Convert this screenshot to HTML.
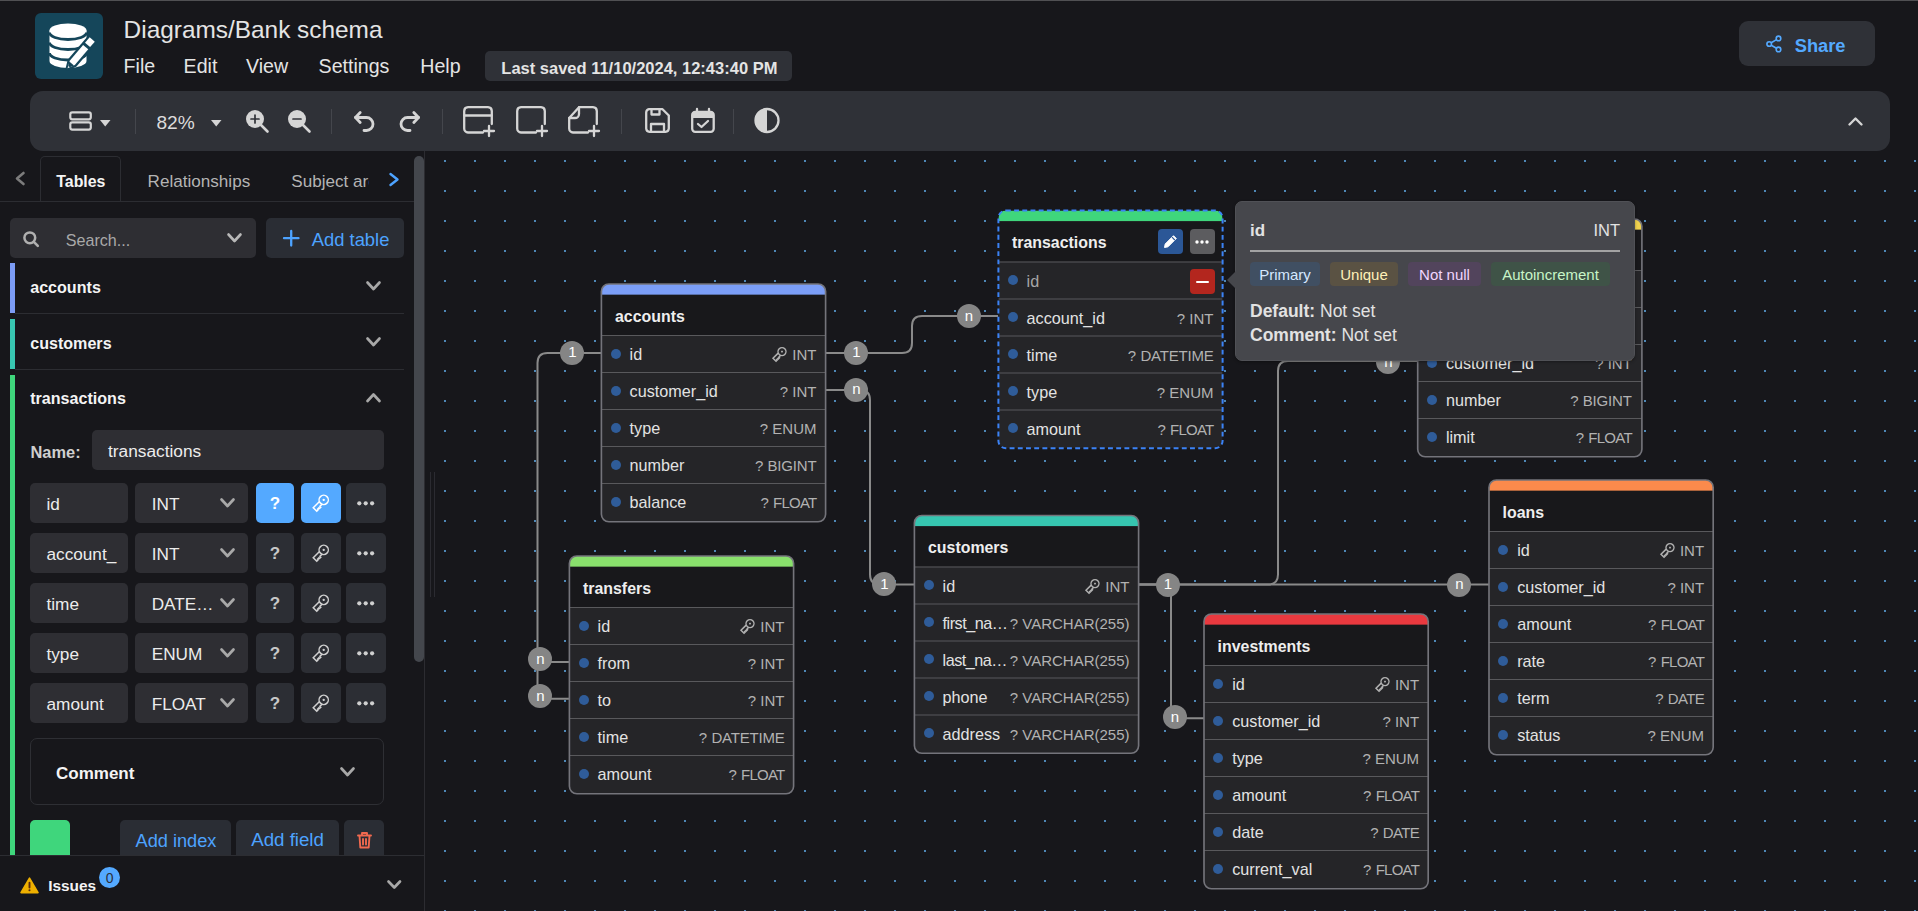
<!DOCTYPE html>
<html><head><meta charset="utf-8"><title>drawDB</title>
<style>
html,body{margin:0;padding:0;}
body{width:1918px;height:911px;overflow:hidden;background:#17171b;position:relative;font-family:"Liberation Sans", sans-serif;}
.t{position:absolute;white-space:pre;line-height:1;}
svg{display:block}
</style></head><body>
<div style="position:absolute;left:0px;top:0px;width:1918px;height:1px;background:#505053;border-radius:0px;"></div>
<div style="position:absolute;left:35px;top:13px;width:68px;height:66px;background:#15465a;border-radius:6px;"></div>
<svg style="position:absolute;left:35px;top:13px;overflow:visible;" width="68" height="66" viewBox="0 0 68 66">
<path d="M14.5,17.5 V48 A18.5,7 0 0 0 51.5,48 V17.5 Z" fill="#fff"/>
<ellipse cx="33" cy="17.5" rx="18.5" ry="7" fill="#fff"/>
<path d="M14.5,19.5 A18.5,7 0 0 0 51.5,19.5" stroke="#15465a" stroke-width="2.8" fill="none"/>
<path d="M14.5,29.5 A18.5,7 0 0 0 51.5,29.5" stroke="#15465a" stroke-width="2.8" fill="none"/>
<path d="M14.5,40 A18.5,7 0 0 0 51.5,40" stroke="#15465a" stroke-width="2.8" fill="none"/>
<g transform="translate(32.6,55.3) rotate(-49.5) scale(0.96)">
  <path d="M0,0 L7.5,-3.8 H29 V3.8 H7.5 Z" fill="#15465a" stroke="#15465a" stroke-width="4" stroke-linejoin="round"/>
  <path d="M32,-3.8 H39.5 V3.8 H32 Z" fill="#15465a" stroke="#15465a" stroke-width="4"/>
  <path d="M0,0 L7.5,-3.5 H29 V3.5 H7.5 Z" fill="#fff"/>
  <path d="M2.3,-1.1 L6.5,-3.2 V3.2 L2.3,1.1 Z" fill="#15465a"/>
  <path d="M32,-3.5 H39.5 V3.5 H32 Z" fill="#fff"/>
</g></svg>
<div class="t" style="left:123.60px;top:18.05px;font-size:24.4px;color:#e4e4e4;font-weight:400;">Diagrams/Bank schema</div>
<div class="t" style="left:123.60px;top:57.01px;font-size:19.6px;color:#e4e4e4;font-weight:400;">File</div>
<div class="t" style="left:183.60px;top:57.01px;font-size:19.6px;color:#e4e4e4;font-weight:400;">Edit</div>
<div class="t" style="left:246.00px;top:57.01px;font-size:19.6px;color:#e4e4e4;font-weight:400;">View</div>
<div class="t" style="left:318.60px;top:57.01px;font-size:19.6px;color:#e4e4e4;font-weight:400;">Settings</div>
<div class="t" style="left:420.30px;top:57.01px;font-size:19.6px;color:#e4e4e4;font-weight:400;">Help</div>
<div style="position:absolute;left:485px;top:51px;width:307px;height:30px;background:#2f3137;border-radius:5px;"></div>
<div class="t" style="left:501.30px;top:59.83px;font-size:16.5px;color:#e4e4e4;font-weight:700;">Last saved 11/10/2024, 12:43:40 PM</div>
<div style="position:absolute;left:1739px;top:21px;width:136px;height:45px;background:#2f3137;border-radius:9px;"></div>
<svg style="position:absolute;left:1767px;top:36px;overflow:visible;" width="16" height="17" viewBox="0 0 16 17"><g fill="none" stroke="#54a9ff" stroke-width="1.6">
<circle cx="11.5" cy="2.4" r="2.3"/><circle cx="2.2" cy="8" r="2.3"/><circle cx="11.5" cy="13.4" r="2.3"/>
<path d="M4.2,6.8 L9.5,3.6 M4.2,9.2 L9.5,12.2"/></g></svg>
<div class="t" style="left:1794.70px;top:36.71px;font-size:18.3px;color:#54a9ff;font-weight:700;">Share</div>
<div style="position:absolute;left:30px;top:91px;width:1860px;height:60px;background:#2f3137;border-radius:13px;"></div>
<svg style="position:absolute;left:68px;top:111px;overflow:visible;" width="24" height="20" viewBox="0 0 24 20"><g fill="none" stroke="#d5d5d5" stroke-width="2.2"><rect x="2.3" y="1.3" width="20.5" height="7" rx="2"/><rect x="2.3" y="11.3" width="20.5" height="7.3" rx="2"/></g></svg>
<svg style="position:absolute;left:99.6px;top:119.8px;overflow:visible;" width="10.5" height="6.6" viewBox="0 0 10.5 6.6"><path d="M0,0 H10.5 L5.25,6.6 Z" fill="#d5d5d5"/></svg>
<div style="position:absolute;left:135px;top:109px;width:1px;height:25px;background:#44464c;border-radius:0px;"></div>
<div class="t" style="left:156.40px;top:112.69px;font-size:19.15px;color:#dcdcdc;font-weight:400;">82%</div>
<svg style="position:absolute;left:210.7px;top:120px;overflow:visible;" width="10.5" height="6.6" viewBox="0 0 10.5 6.6"><path d="M0,0 H10.5 L5.25,6.6 Z" fill="#d5d5d5"/></svg>
<svg style="position:absolute;left:246px;top:110px;overflow:visible;" width="23" height="23" viewBox="0 0 23 23"><circle cx="9" cy="9" r="9" fill="#d5d5d5"/><path d="M15,15 L21.5,21.5" stroke="#d5d5d5" stroke-width="2.6" stroke-linecap="round"/><path d="M5,9 H13" stroke="#2f3137" stroke-width="1.7" stroke-linecap="round"/><path d="M9,5 V13" stroke="#2f3137" stroke-width="1.7" stroke-linecap="round"/></svg>
<svg style="position:absolute;left:288px;top:110px;overflow:visible;" width="23" height="23" viewBox="0 0 23 23"><circle cx="9" cy="9" r="9" fill="#d5d5d5"/><path d="M15,15 L21.5,21.5" stroke="#d5d5d5" stroke-width="2.6" stroke-linecap="round"/><path d="M5,9 H13" stroke="#2f3137" stroke-width="1.7" stroke-linecap="round"/></svg>
<div style="position:absolute;left:331px;top:109px;width:1px;height:25px;background:#44464c;border-radius:0px;"></div>
<svg style="position:absolute;left:354px;top:111px;overflow:visible;" width="21" height="21" viewBox="0 0 21 21"><g fill="none" stroke="#d5d5d5" stroke-width="2.8" stroke-linecap="round" stroke-linejoin="round"><path d="M6.2,1.5 L1.5,6.5 L6.2,11.5"/><path d="M1.5,6.5 H12.5 A6.5,6.5 0 0 1 12.5,19.5 H10"/></g></svg>
<svg style="position:absolute;left:399px;top:111px;overflow:visible;" width="21" height="21" viewBox="0 0 21 21"><g fill="none" stroke="#d5d5d5" stroke-width="2.8" stroke-linecap="round" stroke-linejoin="round"><path d="M14.8,1.5 L19.5,6.5 L14.8,11.5"/><path d="M19.5,6.5 H8.5 A6.5,6.5 0 0 0 8.5,19.5 H11"/></g></svg>
<div style="position:absolute;left:442px;top:109px;width:1px;height:25px;background:#44464c;border-radius:0px;"></div>
<svg style="position:absolute;left:463px;top:106px;overflow:visible;" width="33" height="31" viewBox="0 0 33 31"><g fill="none" stroke="#d5d5d5" stroke-width="2.3" stroke-linecap="round" stroke-linejoin="round"><path d="M20,26.5 H5 A4,4 0 0 1 1.2,22.5 V5 A4,4 0 0 1 5,1.2 H25 A4,4 0 0 1 28.8,5 V18"/><path d="M1.2,9.5 H28.8"/><path d="M21,25 H31 M26,20 V30"/></g></svg>
<svg style="position:absolute;left:516px;top:106px;overflow:visible;" width="33" height="31" viewBox="0 0 33 31"><g fill="none" stroke="#d5d5d5" stroke-width="2.3" stroke-linecap="round" stroke-linejoin="round"><path d="M20,26.5 H5 A4,4 0 0 1 1.2,22.5 V5 A4,4 0 0 1 5,1.2 H25 A4,4 0 0 1 28.8,5 V18"/><path d="M21,25 H31 M26,20 V30"/></g></svg>
<svg style="position:absolute;left:568px;top:106px;overflow:visible;" width="33" height="31" viewBox="0 0 33 31"><g fill="none" stroke="#d5d5d5" stroke-width="2.3" stroke-linecap="round" stroke-linejoin="round"><path d="M20,26.5 H5 A4,4 0 0 1 1.2,22.5 V12 L11,1.2 H25 A4,4 0 0 1 28.8,5 V18"/><path d="M1.2,12 H7 A4,4 0 0 0 11,8 V1.2"/><path d="M21,25 H31 M26,20 V30"/></g></svg>
<div style="position:absolute;left:621px;top:109px;width:1px;height:25px;background:#44464c;border-radius:0px;"></div>
<svg style="position:absolute;left:644.5px;top:108px;overflow:visible;" width="25" height="25" viewBox="0 0 25 25"><g fill="none" stroke="#d5d5d5" stroke-width="2.3" stroke-linecap="round" stroke-linejoin="round"><path d="M4,1.2 H17.5 L23.8,7.5 V20.5 A3.5,3.5 0 0 1 20.5,23.8 H4.5 A3.5,3.5 0 0 1 1.2,20.5 V4.5 A3.5,3.5 0 0 1 4,1.2 Z"/><path d="M6.5,1.5 V6.5 H14.5 V1.5"/><path d="M6,23.5 V16 H19 V23.5"/></g></svg>
<svg style="position:absolute;left:691px;top:108px;overflow:visible;" width="24" height="25" viewBox="0 0 24 25"><g fill="none" stroke="#d5d5d5" stroke-width="2.3" stroke-linecap="round" stroke-linejoin="round"><rect x="1.2" y="4" width="21.5" height="19.8" rx="3"/><path d="M6,1 V6 M18,1 V6"/></g><path d="M2,5 H22 V10 H2 Z" fill="#d5d5d5"/><path d="M7,16 L10.5,19 L17,13" fill="none" stroke="#d5d5d5" stroke-width="2.3" stroke-linecap="round" stroke-linejoin="round"/></svg>
<div style="position:absolute;left:733px;top:109px;width:1px;height:25px;background:#44464c;border-radius:0px;"></div>
<svg style="position:absolute;left:754px;top:108px;overflow:visible;" width="26" height="26" viewBox="0 0 26 26"><circle cx="13" cy="12.5" r="11.5" fill="none" stroke="#d5d5d5" stroke-width="2.3"/><path d="M13,1 A11.5,11.5 0 0 0 13,24 Z" fill="#d5d5d5"/></svg>
<svg style="position:absolute;left:1848px;top:117px;overflow:visible;" width="15" height="9" viewBox="0 0 15 9"><path d="M1.5,7.5 L7.5,1.5 L13.5,7.5" fill="none" stroke="#d5d5d5" stroke-width="2.4" stroke-linecap="round" stroke-linejoin="round"/></svg>
<svg style="position:absolute;left:425px;top:151px" width="1493" height="760"><defs><pattern id="g" x="0" y="0" width="30" height="30" patternUnits="userSpaceOnUse"><rect x="19" y="9" width="2" height="2" fill="#4f88b6"/></pattern></defs><rect width="1493" height="760" fill="url(#g)"/></svg>
<div style="position:absolute;left:0px;top:151px;width:425px;height:760px;background:#17171b;border-radius:0px;"></div>
<div style="position:absolute;left:424px;top:151px;width:1px;height:760px;background:#2c2c31;border-radius:0px;"></div>
<svg style="position:absolute;left:15px;top:172px;overflow:visible;" width="10" height="13" viewBox="0 0 10 13"><path d="M8.5,1 L2,6.5 L8.5,12" fill="none" stroke="#7c7c7c" stroke-width="2.6" stroke-linecap="round" stroke-linejoin="round"/></svg>
<div style="position:absolute;left:40px;top:156px;width:81px;height:46px;border:1px solid #2c2d32;border-bottom:none;border-radius:5px 5px 0 0;box-sizing:border-box;background:#17171b"></div>
<div style="position:absolute;left:0px;top:201px;width:414px;height:1px;background:#2c2d32;border-radius:0px;"></div>
<div class="t" style="left:56.30px;top:173.54px;font-size:15.9px;color:#f4f4f4;font-weight:700;">Tables</div>
<div class="t" style="left:147.60px;top:172.52px;font-size:17.1px;color:#b4b4b4;font-weight:400;">Relationships</div>
<div style="position:absolute;left:291px;top:165px;width:78px;height:30px;overflow:hidden">
<div class="t" style="left:0.30px;top:7.52px;font-size:17.1px;color:#b4b4b4;font-weight:400;">Subject areas</div>
</div>
<svg style="position:absolute;left:389px;top:173px;overflow:visible;" width="11" height="13" viewBox="0 0 11 13"><path d="M1.5,1 L8.5,6.5 L1.5,12" fill="none" stroke="#4da3ff" stroke-width="2.4" stroke-linecap="round" stroke-linejoin="round"/></svg>
<div style="position:absolute;left:414px;top:156px;width:10px;height:506px;background:#44474d;border-radius:5px;"></div>
<div style="position:absolute;left:430px;top:472px;width:1px;height:125px;background:#2b2b31;border-radius:0px;"></div>
<div style="position:absolute;left:434px;top:472px;width:1px;height:125px;background:#2b2b31;border-radius:0px;"></div>
<div style="position:absolute;left:10px;top:218px;width:246px;height:40px;background:#2e2e33;border-radius:5px;"></div>
<svg style="position:absolute;left:23px;top:230.5px;overflow:visible;" width="17" height="16" viewBox="0 0 17 16"><circle cx="6.8" cy="6.8" r="5.4" fill="none" stroke="#b0b0b0" stroke-width="2.5"/><path d="M10.8,10.8 L14.8,14.8" stroke="#b0b0b0" stroke-width="2.6" stroke-linecap="round"/></svg>
<div class="t" style="left:65.80px;top:232.07px;font-size:16.1px;color:#a9a9a9;font-weight:400;">Search...</div>
<svg style="position:absolute;left:227px;top:233px;overflow:visible;" width="16" height="10" viewBox="0 0 16 10"><path d="M1.5,1.5 L7.5,8 L13.5,1.5" fill="none" stroke="#b8b8b8" stroke-width="2.6" stroke-linecap="round" stroke-linejoin="round"/></svg>
<div style="position:absolute;left:266px;top:218px;width:138px;height:40px;background:#2a2d34;border-radius:5px;"></div>
<svg style="position:absolute;left:283px;top:230px;overflow:visible;" width="17" height="17" viewBox="0 0 17 17"><path d="M8.2,1 V15.5 M1,8.2 H15.5" stroke="#4da3ff" stroke-width="2.3" stroke-linecap="round"/></svg>
<div class="t" style="left:311.70px;top:230.72px;font-size:18.4px;color:#4da3ff;font-weight:400;">Add table</div>
<div style="position:absolute;left:10px;top:263px;width:5px;height:50px;background:#7c9cf5;border-radius:0px;"></div>
<div class="t" style="left:30.20px;top:279.37px;font-size:16.1px;color:#f4f4f4;font-weight:700;">accounts</div>
<svg style="position:absolute;left:366px;top:281px;overflow:visible;" width="16" height="10" viewBox="0 0 16 10"><path d="M1.5,1.5 L7.5,8 L13.5,1.5" fill="none" stroke="#a8a8a8" stroke-width="2.7" stroke-linecap="round" stroke-linejoin="round"/></svg>
<div style="position:absolute;left:15px;top:313px;width:389px;height:1px;background:#2c2d32;border-radius:0px;"></div>
<div style="position:absolute;left:10px;top:319px;width:5px;height:50px;background:#38c6b1;border-radius:0px;"></div>
<div class="t" style="left:30.20px;top:335.37px;font-size:16.1px;color:#f4f4f4;font-weight:700;">customers</div>
<svg style="position:absolute;left:366px;top:337px;overflow:visible;" width="16" height="10" viewBox="0 0 16 10"><path d="M1.5,1.5 L7.5,8 L13.5,1.5" fill="none" stroke="#a8a8a8" stroke-width="2.7" stroke-linecap="round" stroke-linejoin="round"/></svg>
<div style="position:absolute;left:15px;top:369px;width:389px;height:1px;background:#2c2d32;border-radius:0px;"></div>
<div style="position:absolute;left:10px;top:375px;width:5px;height:480px;background:#3fd67c;border-radius:0px;"></div>
<div class="t" style="left:30.20px;top:390.37px;font-size:16.1px;color:#f4f4f4;font-weight:700;">transactions</div>
<svg style="position:absolute;left:366px;top:393px;overflow:visible;" width="16" height="10" viewBox="0 0 16 10"><path d="M1.5,8 L7.5,1.5 L13.5,8" fill="none" stroke="#a8a8a8" stroke-width="2.7" stroke-linecap="round" stroke-linejoin="round"/></svg>
<div class="t" style="left:30.50px;top:444.12px;font-size:16.4px;color:#cfcfcf;font-weight:700;">Name:</div>
<div style="position:absolute;left:92px;top:430px;width:292px;height:40px;background:#2e2e33;border-radius:5px;"></div>
<div class="t" style="left:108.00px;top:443.36px;font-size:17.3px;color:#ececec;font-weight:400;">transactions</div>
<div style="position:absolute;left:30px;top:483px;width:98px;height:40px;background:#2e2e33;border-radius:5px;"></div>
<div class="t" style="left:46.50px;top:496.14px;font-size:17.2px;color:#ececec;font-weight:400;">id</div>
<div style="position:absolute;left:135px;top:483px;width:113px;height:40px;background:#2e2e33;border-radius:5px;"></div>
<div class="t" style="left:151.70px;top:496.14px;font-size:17.2px;color:#ececec;font-weight:400;">INT</div>
<svg style="position:absolute;left:219.5px;top:497.5px;overflow:visible;" width="16" height="10" viewBox="0 0 16 10"><path d="M1.5,1.5 L7.5,8 L13.5,1.5" fill="none" stroke="#a8a8a8" stroke-width="2.7" stroke-linecap="round" stroke-linejoin="round"/></svg>
<div style="position:absolute;left:256px;top:483px;width:38px;height:40px;background:#54a9ff;border-radius:5px;"></div>
<div class="t" style="left:275.00px;transform:translateX(-50%);top:495.41px;font-size:17px;color:#ffffff;font-weight:700;">?</div>
<div style="position:absolute;left:301px;top:483px;width:40px;height:40px;background:#54a9ff;border-radius:5px;"></div>
<svg style="position:absolute;left:301px;top:483px;overflow:visible;" width="40" height="40" viewBox="0 0 40 40"><g transform="translate(22.7,16.9) scale(1.0) rotate(-45)"><g fill="none" stroke="#ffffff" stroke-width="1.5" stroke-linejoin="miter"><circle cx="0" cy="0" r="4.6"/><path d="M-4.4,-1.9 H-12.9 V3.1 H-10.9 V2.2 H-9.0 V3.1 H-7.2 V1.9 H-4.4"/></g><circle cx="0" cy="0" r="1.15" fill="#ffffff"/></g></svg>
<div style="position:absolute;left:346px;top:483px;width:40px;height:40px;background:#2c2e34;border-radius:5px;"></div>
<svg style="position:absolute;left:357px;top:501px;overflow:visible;" width="18" height="5" viewBox="0 0 18 5"><g fill="#d0d0d0"><circle cx="2.3" cy="2.3" r="2.1"/><circle cx="8.7" cy="2.3" r="2.1"/><circle cx="15.1" cy="2.3" r="2.1"/></g></svg>
<div style="position:absolute;left:30px;top:533px;width:98px;height:40px;background:#2e2e33;border-radius:5px;"></div>
<div class="t" style="left:46.50px;top:546.14px;font-size:17.2px;color:#ececec;font-weight:400;">account_</div>
<div style="position:absolute;left:135px;top:533px;width:113px;height:40px;background:#2e2e33;border-radius:5px;"></div>
<div class="t" style="left:151.70px;top:546.14px;font-size:17.2px;color:#ececec;font-weight:400;">INT</div>
<svg style="position:absolute;left:219.5px;top:547.5px;overflow:visible;" width="16" height="10" viewBox="0 0 16 10"><path d="M1.5,1.5 L7.5,8 L13.5,1.5" fill="none" stroke="#a8a8a8" stroke-width="2.7" stroke-linecap="round" stroke-linejoin="round"/></svg>
<div style="position:absolute;left:256px;top:533px;width:38px;height:40px;background:#2c2e34;border-radius:5px;"></div>
<div class="t" style="left:275.00px;transform:translateX(-50%);top:545.41px;font-size:17px;color:#c8c8c8;font-weight:700;">?</div>
<div style="position:absolute;left:301px;top:533px;width:40px;height:40px;background:#2c2e34;border-radius:5px;"></div>
<svg style="position:absolute;left:301px;top:533px;overflow:visible;" width="40" height="40" viewBox="0 0 40 40"><g transform="translate(22.7,16.9) scale(1.0) rotate(-45)"><g fill="none" stroke="#d0d0d0" stroke-width="1.5" stroke-linejoin="miter"><circle cx="0" cy="0" r="4.6"/><path d="M-4.4,-1.9 H-12.9 V3.1 H-10.9 V2.2 H-9.0 V3.1 H-7.2 V1.9 H-4.4"/></g><circle cx="0" cy="0" r="1.15" fill="#d0d0d0"/></g></svg>
<div style="position:absolute;left:346px;top:533px;width:40px;height:40px;background:#2c2e34;border-radius:5px;"></div>
<svg style="position:absolute;left:357px;top:551px;overflow:visible;" width="18" height="5" viewBox="0 0 18 5"><g fill="#d0d0d0"><circle cx="2.3" cy="2.3" r="2.1"/><circle cx="8.7" cy="2.3" r="2.1"/><circle cx="15.1" cy="2.3" r="2.1"/></g></svg>
<div style="position:absolute;left:30px;top:583px;width:98px;height:40px;background:#2e2e33;border-radius:5px;"></div>
<div class="t" style="left:46.50px;top:596.14px;font-size:17.2px;color:#ececec;font-weight:400;">time</div>
<div style="position:absolute;left:135px;top:583px;width:113px;height:40px;background:#2e2e33;border-radius:5px;"></div>
<div class="t" style="left:151.70px;top:596.14px;font-size:17.2px;color:#ececec;font-weight:400;">DATE…</div>
<svg style="position:absolute;left:219.5px;top:597.5px;overflow:visible;" width="16" height="10" viewBox="0 0 16 10"><path d="M1.5,1.5 L7.5,8 L13.5,1.5" fill="none" stroke="#a8a8a8" stroke-width="2.7" stroke-linecap="round" stroke-linejoin="round"/></svg>
<div style="position:absolute;left:256px;top:583px;width:38px;height:40px;background:#2c2e34;border-radius:5px;"></div>
<div class="t" style="left:275.00px;transform:translateX(-50%);top:595.41px;font-size:17px;color:#c8c8c8;font-weight:700;">?</div>
<div style="position:absolute;left:301px;top:583px;width:40px;height:40px;background:#2c2e34;border-radius:5px;"></div>
<svg style="position:absolute;left:301px;top:583px;overflow:visible;" width="40" height="40" viewBox="0 0 40 40"><g transform="translate(22.7,16.9) scale(1.0) rotate(-45)"><g fill="none" stroke="#d0d0d0" stroke-width="1.5" stroke-linejoin="miter"><circle cx="0" cy="0" r="4.6"/><path d="M-4.4,-1.9 H-12.9 V3.1 H-10.9 V2.2 H-9.0 V3.1 H-7.2 V1.9 H-4.4"/></g><circle cx="0" cy="0" r="1.15" fill="#d0d0d0"/></g></svg>
<div style="position:absolute;left:346px;top:583px;width:40px;height:40px;background:#2c2e34;border-radius:5px;"></div>
<svg style="position:absolute;left:357px;top:601px;overflow:visible;" width="18" height="5" viewBox="0 0 18 5"><g fill="#d0d0d0"><circle cx="2.3" cy="2.3" r="2.1"/><circle cx="8.7" cy="2.3" r="2.1"/><circle cx="15.1" cy="2.3" r="2.1"/></g></svg>
<div style="position:absolute;left:30px;top:633px;width:98px;height:40px;background:#2e2e33;border-radius:5px;"></div>
<div class="t" style="left:46.50px;top:646.14px;font-size:17.2px;color:#ececec;font-weight:400;">type</div>
<div style="position:absolute;left:135px;top:633px;width:113px;height:40px;background:#2e2e33;border-radius:5px;"></div>
<div class="t" style="left:151.70px;top:646.14px;font-size:17.2px;color:#ececec;font-weight:400;">ENUM</div>
<svg style="position:absolute;left:219.5px;top:647.5px;overflow:visible;" width="16" height="10" viewBox="0 0 16 10"><path d="M1.5,1.5 L7.5,8 L13.5,1.5" fill="none" stroke="#a8a8a8" stroke-width="2.7" stroke-linecap="round" stroke-linejoin="round"/></svg>
<div style="position:absolute;left:256px;top:633px;width:38px;height:40px;background:#2c2e34;border-radius:5px;"></div>
<div class="t" style="left:275.00px;transform:translateX(-50%);top:645.41px;font-size:17px;color:#c8c8c8;font-weight:700;">?</div>
<div style="position:absolute;left:301px;top:633px;width:40px;height:40px;background:#2c2e34;border-radius:5px;"></div>
<svg style="position:absolute;left:301px;top:633px;overflow:visible;" width="40" height="40" viewBox="0 0 40 40"><g transform="translate(22.7,16.9) scale(1.0) rotate(-45)"><g fill="none" stroke="#d0d0d0" stroke-width="1.5" stroke-linejoin="miter"><circle cx="0" cy="0" r="4.6"/><path d="M-4.4,-1.9 H-12.9 V3.1 H-10.9 V2.2 H-9.0 V3.1 H-7.2 V1.9 H-4.4"/></g><circle cx="0" cy="0" r="1.15" fill="#d0d0d0"/></g></svg>
<div style="position:absolute;left:346px;top:633px;width:40px;height:40px;background:#2c2e34;border-radius:5px;"></div>
<svg style="position:absolute;left:357px;top:651px;overflow:visible;" width="18" height="5" viewBox="0 0 18 5"><g fill="#d0d0d0"><circle cx="2.3" cy="2.3" r="2.1"/><circle cx="8.7" cy="2.3" r="2.1"/><circle cx="15.1" cy="2.3" r="2.1"/></g></svg>
<div style="position:absolute;left:30px;top:683px;width:98px;height:40px;background:#2e2e33;border-radius:5px;"></div>
<div class="t" style="left:46.50px;top:696.14px;font-size:17.2px;color:#ececec;font-weight:400;">amount</div>
<div style="position:absolute;left:135px;top:683px;width:113px;height:40px;background:#2e2e33;border-radius:5px;"></div>
<div class="t" style="left:151.70px;top:696.14px;font-size:17.2px;color:#ececec;font-weight:400;">FLOAT</div>
<svg style="position:absolute;left:219.5px;top:697.5px;overflow:visible;" width="16" height="10" viewBox="0 0 16 10"><path d="M1.5,1.5 L7.5,8 L13.5,1.5" fill="none" stroke="#a8a8a8" stroke-width="2.7" stroke-linecap="round" stroke-linejoin="round"/></svg>
<div style="position:absolute;left:256px;top:683px;width:38px;height:40px;background:#2c2e34;border-radius:5px;"></div>
<div class="t" style="left:275.00px;transform:translateX(-50%);top:695.41px;font-size:17px;color:#c8c8c8;font-weight:700;">?</div>
<div style="position:absolute;left:301px;top:683px;width:40px;height:40px;background:#2c2e34;border-radius:5px;"></div>
<svg style="position:absolute;left:301px;top:683px;overflow:visible;" width="40" height="40" viewBox="0 0 40 40"><g transform="translate(22.7,16.9) scale(1.0) rotate(-45)"><g fill="none" stroke="#d0d0d0" stroke-width="1.5" stroke-linejoin="miter"><circle cx="0" cy="0" r="4.6"/><path d="M-4.4,-1.9 H-12.9 V3.1 H-10.9 V2.2 H-9.0 V3.1 H-7.2 V1.9 H-4.4"/></g><circle cx="0" cy="0" r="1.15" fill="#d0d0d0"/></g></svg>
<div style="position:absolute;left:346px;top:683px;width:40px;height:40px;background:#2c2e34;border-radius:5px;"></div>
<svg style="position:absolute;left:357px;top:701px;overflow:visible;" width="18" height="5" viewBox="0 0 18 5"><g fill="#d0d0d0"><circle cx="2.3" cy="2.3" r="2.1"/><circle cx="8.7" cy="2.3" r="2.1"/><circle cx="15.1" cy="2.3" r="2.1"/></g></svg>
<div style="position:absolute;left:30px;top:738px;width:354px;height:67px;border:1px solid #2e2f34;border-radius:7px;box-sizing:border-box"></div>
<div class="t" style="left:56.00px;top:764.61px;font-size:17px;color:#f4f4f4;font-weight:700;">Comment</div>
<svg style="position:absolute;left:340px;top:767px;overflow:visible;" width="16" height="10" viewBox="0 0 16 10"><path d="M1.5,1.5 L7.5,8 L13.5,1.5" fill="none" stroke="#a8a8a8" stroke-width="2.7" stroke-linecap="round" stroke-linejoin="round"/></svg>
<div style="position:absolute;left:0;top:0;width:425px;height:855px;overflow:hidden;pointer-events:none">
<div style="position:absolute;left:30px;top:820px;width:40px;height:45px;background:#3fd67c;border-radius:5px;"></div>
<div style="position:absolute;left:120px;top:820px;width:111px;height:45px;background:#2a2d34;border-radius:5px;"></div>
<div class="t" style="left:135.50px;top:831.89px;font-size:18.2px;color:#4da3ff;font-weight:400;">Add index</div>
<div style="position:absolute;left:236px;top:820px;width:103px;height:45px;background:#2a2d34;border-radius:5px;"></div>
<div class="t" style="left:251.20px;top:831.47px;font-size:18.7px;color:#4da3ff;font-weight:400;">Add field</div>
<div style="position:absolute;left:344px;top:820px;width:40px;height:45px;background:#2a2d34;border-radius:5px;"></div>
<svg style="position:absolute;left:357px;top:832px;overflow:visible;" width="15" height="17" viewBox="0 0 15 17"><g fill="none" stroke="#f0694f" stroke-width="1.9" stroke-linecap="round" stroke-linejoin="round"><path d="M1,3.5 H14 M5,3.5 V1 H10 V3.5 M2.5,3.5 L3.3,15.5 H11.7 L12.5,3.5 M6,7 V12.5 M9,7 V12.5"/></g></svg>
</div>
<div style="position:absolute;left:0px;top:855px;width:424px;height:1px;background:#2c2d32;border-radius:0px;"></div>
<svg style="position:absolute;left:20px;top:877px;overflow:visible;" width="19" height="17" viewBox="0 0 19 17"><path d="M9.5,1.2 L18,15.6 H1 Z" fill="#eeb000" stroke="#eeb000" stroke-width="1.6" stroke-linejoin="round"/><path d="M9.5,5.8 V10.6" stroke="#5a2a10" stroke-width="1.9" stroke-linecap="round"/><circle cx="9.5" cy="13.3" r="1.05" fill="#5a2a10"/></svg>
<div class="t" style="left:48.20px;top:878.36px;font-size:15.4px;color:#f4f4f4;font-weight:700;">Issues</div>
<div style="position:absolute;left:99px;top:867px;width:21px;height:21px;border-radius:50%;background:#54a9ff"></div>
<div class="t" style="left:109.60px;transform:translateX(-50%);top:871.15px;font-size:14px;color:#2b2f3a;font-weight:400;">0</div>
<svg style="position:absolute;left:387px;top:880px;overflow:visible;" width="15" height="10" viewBox="0 0 15 10"><path d="M1.5,1.5 L7.3,7.5 L13,1.5" fill="none" stroke="#a8a8a8" stroke-width="2.7" stroke-linecap="round" stroke-linejoin="round"/></svg>
<svg style="position:absolute;left:0;top:0" width="1918" height="911"><path d="M601,352.9 H547.5 Q537.5,352.9 537.5,362.9 V688.7 Q537.5,698.7 547.5,698.7 H569" fill="none" stroke="#8a8a8a" stroke-width="2"/><path d="M537.5,652 Q537.5,662 547.5,662 H569" fill="none" stroke="#8a8a8a" stroke-width="2"/><path d="M826,352.9 H902 Q912,352.9 912,342.9 V326.1 Q912,316.1 922,316.1 H998" fill="none" stroke="#8a8a8a" stroke-width="2"/><path d="M826,389.9 H860 Q870,389.9 870,399.9 V574.6 Q870,584.6 880,584.6 H914" fill="none" stroke="#8a8a8a" stroke-width="2"/><path d="M1138,584.6 H1489" fill="none" stroke="#8a8a8a" stroke-width="2"/><path d="M1138,584.6 H1161 Q1171,584.6 1171,594.6 V708.3 Q1171,718.3 1181,718.3 H1204" fill="none" stroke="#8a8a8a" stroke-width="2"/><path d="M1138,584.6 H1268 Q1278,584.6 1278,574.6 V371 Q1278,361 1288,361 H1418" fill="none" stroke="#8a8a8a" stroke-width="2"/></svg>
<svg style="position:absolute;left:0;top:0;overflow:visible" width="1" height="1"><defs><clipPath id="c601283"><rect x="601.4" y="284" width="224.2" height="237.8" rx="7.5"/></clipPath></defs><g clip-path="url(#c601283)"><rect x="601.4" y="284" width="224.2" height="237.8" fill="#252528"/><rect x="601.4" y="284" width="224.2" height="10.800000000000011" fill="#7b9ef7"/><rect x="601.4" y="294.8" width="224.2" height="40.2" fill="#18181b"/><rect x="601.4" y="335" width="224.2" height="1" fill="#59595c"/><rect x="601.4" y="372" width="224.2" height="1" fill="#59595c"/><rect x="601.4" y="409" width="224.2" height="1" fill="#59595c"/><rect x="601.4" y="446" width="224.2" height="1" fill="#59595c"/><rect x="601.4" y="483" width="224.2" height="1" fill="#59595c"/></g><rect x="601.4" y="284" width="224.2" height="237.8" rx="7.5" fill="none" stroke="#74747b" stroke-width="1.64"/></svg>
<div class="t" style="left:615.00px;top:308.54px;font-size:15.9px;color:#eeeeee;font-weight:700;">accounts</div>
<div style="position:absolute;left:610.5px;top:348.5px;width:10px;height:10px;border-radius:50%;background:#2f5c99"></div>
<div class="t" style="left:629.60px;top:346.09px;font-size:16.2px;color:#e2e2e2;font-weight:400;">id</div>
<div class="t" style="right:1101.50px;top:347.10px;font-size:15px;color:#b2b2b2;font-weight:400;">INT</div>
<svg style="position:absolute;left:766px;top:335px;overflow:visible" width="30" height="37"><g transform="translate(16,16.6) scale(0.86) rotate(-45)"><g fill="none" stroke="#b2b2b2" stroke-width="1.7" stroke-linejoin="miter"><circle cx="0" cy="0" r="4.6"/><path d="M-4.4,-1.9 H-12.9 V3.1 H-10.9 V2.2 H-9.0 V3.1 H-7.2 V1.9 H-4.4"/></g><circle cx="0" cy="0" r="1.15" fill="#b2b2b2"/></g></svg>
<div style="position:absolute;left:610.5px;top:385.5px;width:10px;height:10px;border-radius:50%;background:#2f5c99"></div>
<div class="t" style="left:629.60px;top:383.09px;font-size:16.2px;color:#e2e2e2;font-weight:400;">customer_id</div>
<div class="t" style="right:1101.50px;top:384.10px;font-size:15px;color:#b2b2b2;font-weight:400;">? INT</div>
<div style="position:absolute;left:610.5px;top:422.5px;width:10px;height:10px;border-radius:50%;background:#2f5c99"></div>
<div class="t" style="left:629.60px;top:420.09px;font-size:16.2px;color:#e2e2e2;font-weight:400;">type</div>
<div class="t" style="right:1101.50px;top:421.10px;font-size:15px;color:#b2b2b2;font-weight:400;">? ENUM</div>
<div style="position:absolute;left:610.5px;top:459.5px;width:10px;height:10px;border-radius:50%;background:#2f5c99"></div>
<div class="t" style="left:629.60px;top:457.09px;font-size:16.2px;color:#e2e2e2;font-weight:400;">number</div>
<div class="t" style="right:1101.50px;top:458.10px;font-size:15px;color:#b2b2b2;font-weight:400;">? <span style="letter-spacing:-0.15px">BIGINT</span></div>
<div style="position:absolute;left:610.5px;top:496.5px;width:10px;height:10px;border-radius:50%;background:#2f5c99"></div>
<div class="t" style="left:629.60px;top:494.09px;font-size:16.2px;color:#e2e2e2;font-weight:400;">balance</div>
<div class="t" style="right:1101.50px;top:495.10px;font-size:15px;color:#b2b2b2;font-weight:400;">? <span style="letter-spacing:-0.75px">FLOAT</span></div>
<svg style="position:absolute;left:0;top:0;overflow:visible" width="1" height="1"><defs><clipPath id="c569555"><rect x="569.4" y="556" width="224.2" height="237.8" rx="7.5"/></clipPath></defs><g clip-path="url(#c569555)"><rect x="569.4" y="556" width="224.2" height="237.8" fill="#252528"/><rect x="569.4" y="556" width="224.2" height="10.799999999999955" fill="#89e06c"/><rect x="569.4" y="566.8" width="224.2" height="40.2" fill="#18181b"/><rect x="569.4" y="607" width="224.2" height="1" fill="#59595c"/><rect x="569.4" y="644" width="224.2" height="1" fill="#59595c"/><rect x="569.4" y="681" width="224.2" height="1" fill="#59595c"/><rect x="569.4" y="718" width="224.2" height="1" fill="#59595c"/><rect x="569.4" y="755" width="224.2" height="1" fill="#59595c"/></g><rect x="569.4" y="556" width="224.2" height="237.8" rx="7.5" fill="none" stroke="#74747b" stroke-width="1.64"/></svg>
<div class="t" style="left:583.00px;top:580.54px;font-size:15.9px;color:#eeeeee;font-weight:700;">transfers</div>
<div style="position:absolute;left:578.5px;top:620.5px;width:10px;height:10px;border-radius:50%;background:#2f5c99"></div>
<div class="t" style="left:597.60px;top:618.09px;font-size:16.2px;color:#e2e2e2;font-weight:400;">id</div>
<div class="t" style="right:1133.50px;top:619.10px;font-size:15px;color:#b2b2b2;font-weight:400;">INT</div>
<svg style="position:absolute;left:734px;top:607px;overflow:visible" width="30" height="37"><g transform="translate(16,16.6) scale(0.86) rotate(-45)"><g fill="none" stroke="#b2b2b2" stroke-width="1.7" stroke-linejoin="miter"><circle cx="0" cy="0" r="4.6"/><path d="M-4.4,-1.9 H-12.9 V3.1 H-10.9 V2.2 H-9.0 V3.1 H-7.2 V1.9 H-4.4"/></g><circle cx="0" cy="0" r="1.15" fill="#b2b2b2"/></g></svg>
<div style="position:absolute;left:578.5px;top:657.5px;width:10px;height:10px;border-radius:50%;background:#2f5c99"></div>
<div class="t" style="left:597.60px;top:655.09px;font-size:16.2px;color:#e2e2e2;font-weight:400;">from</div>
<div class="t" style="right:1133.50px;top:656.10px;font-size:15px;color:#b2b2b2;font-weight:400;">? INT</div>
<div style="position:absolute;left:578.5px;top:694.5px;width:10px;height:10px;border-radius:50%;background:#2f5c99"></div>
<div class="t" style="left:597.60px;top:692.09px;font-size:16.2px;color:#e2e2e2;font-weight:400;">to</div>
<div class="t" style="right:1133.50px;top:693.10px;font-size:15px;color:#b2b2b2;font-weight:400;">? INT</div>
<div style="position:absolute;left:578.5px;top:731.5px;width:10px;height:10px;border-radius:50%;background:#2f5c99"></div>
<div class="t" style="left:597.60px;top:729.09px;font-size:16.2px;color:#e2e2e2;font-weight:400;">time</div>
<div class="t" style="right:1133.50px;top:730.10px;font-size:15px;color:#b2b2b2;font-weight:400;">? <span style="letter-spacing:-0.2px">DATETIME</span></div>
<div style="position:absolute;left:578.5px;top:768.5px;width:10px;height:10px;border-radius:50%;background:#2f5c99"></div>
<div class="t" style="left:597.60px;top:766.09px;font-size:16.2px;color:#e2e2e2;font-weight:400;">amount</div>
<div class="t" style="right:1133.50px;top:767.10px;font-size:15px;color:#b2b2b2;font-weight:400;">? <span style="letter-spacing:-0.75px">FLOAT</span></div>
<svg style="position:absolute;left:0;top:0;overflow:visible" width="1" height="1"><defs><clipPath id="c914514"><rect x="914.4" y="515.5" width="224.2" height="237.8" rx="7.5"/></clipPath></defs><g clip-path="url(#c914514)"><rect x="914.4" y="515.5" width="224.2" height="237.8" fill="#252528"/><rect x="914.4" y="515.5" width="224.2" height="10.799999999999955" fill="#36c5b0"/><rect x="914.4" y="526.3" width="224.2" height="40.2" fill="#18181b"/><rect x="914.4" y="566.5" width="224.2" height="1" fill="#59595c"/><rect x="914.4" y="603.5" width="224.2" height="1" fill="#59595c"/><rect x="914.4" y="640.5" width="224.2" height="1" fill="#59595c"/><rect x="914.4" y="677.5" width="224.2" height="1" fill="#59595c"/><rect x="914.4" y="714.5" width="224.2" height="1" fill="#59595c"/></g><rect x="914.4" y="515.5" width="224.2" height="237.8" rx="7.5" fill="none" stroke="#74747b" stroke-width="1.64"/></svg>
<div class="t" style="left:928.00px;top:540.04px;font-size:15.9px;color:#eeeeee;font-weight:700;">customers</div>
<div style="position:absolute;left:923.5px;top:580.0px;width:10px;height:10px;border-radius:50%;background:#2f5c99"></div>
<div class="t" style="left:942.60px;top:577.59px;font-size:16.2px;color:#e2e2e2;font-weight:400;">id</div>
<div class="t" style="right:788.50px;top:578.60px;font-size:15px;color:#b2b2b2;font-weight:400;">INT</div>
<svg style="position:absolute;left:1079px;top:566.5px;overflow:visible" width="30" height="37"><g transform="translate(16,16.6) scale(0.86) rotate(-45)"><g fill="none" stroke="#b2b2b2" stroke-width="1.7" stroke-linejoin="miter"><circle cx="0" cy="0" r="4.6"/><path d="M-4.4,-1.9 H-12.9 V3.1 H-10.9 V2.2 H-9.0 V3.1 H-7.2 V1.9 H-4.4"/></g><circle cx="0" cy="0" r="1.15" fill="#b2b2b2"/></g></svg>
<div style="position:absolute;left:923.5px;top:617.0px;width:10px;height:10px;border-radius:50%;background:#2f5c99"></div>
<div class="t" style="left:942.60px;top:614.59px;font-size:16.2px;color:#e2e2e2;font-weight:400;letter-spacing:-0.5px;">first_na…</div>
<div class="t" style="right:788.50px;top:615.60px;font-size:15px;color:#b2b2b2;font-weight:400;">? VARCHAR(255)</div>
<div style="position:absolute;left:923.5px;top:654.0px;width:10px;height:10px;border-radius:50%;background:#2f5c99"></div>
<div class="t" style="left:942.60px;top:651.59px;font-size:16.2px;color:#e2e2e2;font-weight:400;letter-spacing:-0.5px;">last_na…</div>
<div class="t" style="right:788.50px;top:652.60px;font-size:15px;color:#b2b2b2;font-weight:400;">? VARCHAR(255)</div>
<div style="position:absolute;left:923.5px;top:691.0px;width:10px;height:10px;border-radius:50%;background:#2f5c99"></div>
<div class="t" style="left:942.60px;top:688.59px;font-size:16.2px;color:#e2e2e2;font-weight:400;">phone</div>
<div class="t" style="right:788.50px;top:689.60px;font-size:15px;color:#b2b2b2;font-weight:400;">? VARCHAR(255)</div>
<div style="position:absolute;left:923.5px;top:728.0px;width:10px;height:10px;border-radius:50%;background:#2f5c99"></div>
<div class="t" style="left:942.60px;top:725.59px;font-size:16.2px;color:#e2e2e2;font-weight:400;">address</div>
<div class="t" style="right:788.50px;top:726.60px;font-size:15px;color:#b2b2b2;font-weight:400;">? VARCHAR(255)</div>
<svg style="position:absolute;left:0;top:0;overflow:visible" width="1" height="1"><defs><clipPath id="c1203613"><rect x="1204.0" y="614" width="224.2" height="274.8" rx="7.5"/></clipPath></defs><g clip-path="url(#c1203613)"><rect x="1204.0" y="614" width="224.2" height="274.8" fill="#252528"/><rect x="1204.0" y="614" width="224.2" height="10.799999999999955" fill="#e9393f"/><rect x="1204.0" y="624.8" width="224.2" height="40.2" fill="#18181b"/><rect x="1204.0" y="665" width="224.2" height="1" fill="#59595c"/><rect x="1204.0" y="702" width="224.2" height="1" fill="#59595c"/><rect x="1204.0" y="739" width="224.2" height="1" fill="#59595c"/><rect x="1204.0" y="776" width="224.2" height="1" fill="#59595c"/><rect x="1204.0" y="813" width="224.2" height="1" fill="#59595c"/><rect x="1204.0" y="850" width="224.2" height="1" fill="#59595c"/></g><rect x="1204.0" y="614" width="224.2" height="274.8" rx="7.5" fill="none" stroke="#74747b" stroke-width="1.64"/></svg>
<div class="t" style="left:1217.60px;top:638.54px;font-size:15.9px;color:#eeeeee;font-weight:700;">investments</div>
<div style="position:absolute;left:1213.1px;top:678.5px;width:10px;height:10px;border-radius:50%;background:#2f5c99"></div>
<div class="t" style="left:1232.20px;top:676.09px;font-size:16.2px;color:#e2e2e2;font-weight:400;">id</div>
<div class="t" style="right:498.90px;top:677.10px;font-size:15px;color:#b2b2b2;font-weight:400;">INT</div>
<svg style="position:absolute;left:1368.6px;top:665px;overflow:visible" width="30" height="37"><g transform="translate(16,16.6) scale(0.86) rotate(-45)"><g fill="none" stroke="#b2b2b2" stroke-width="1.7" stroke-linejoin="miter"><circle cx="0" cy="0" r="4.6"/><path d="M-4.4,-1.9 H-12.9 V3.1 H-10.9 V2.2 H-9.0 V3.1 H-7.2 V1.9 H-4.4"/></g><circle cx="0" cy="0" r="1.15" fill="#b2b2b2"/></g></svg>
<div style="position:absolute;left:1213.1px;top:715.5px;width:10px;height:10px;border-radius:50%;background:#2f5c99"></div>
<div class="t" style="left:1232.20px;top:713.09px;font-size:16.2px;color:#e2e2e2;font-weight:400;">customer_id</div>
<div class="t" style="right:498.90px;top:714.10px;font-size:15px;color:#b2b2b2;font-weight:400;">? INT</div>
<div style="position:absolute;left:1213.1px;top:752.5px;width:10px;height:10px;border-radius:50%;background:#2f5c99"></div>
<div class="t" style="left:1232.20px;top:750.09px;font-size:16.2px;color:#e2e2e2;font-weight:400;">type</div>
<div class="t" style="right:498.90px;top:751.10px;font-size:15px;color:#b2b2b2;font-weight:400;">? ENUM</div>
<div style="position:absolute;left:1213.1px;top:789.5px;width:10px;height:10px;border-radius:50%;background:#2f5c99"></div>
<div class="t" style="left:1232.20px;top:787.09px;font-size:16.2px;color:#e2e2e2;font-weight:400;">amount</div>
<div class="t" style="right:498.90px;top:788.10px;font-size:15px;color:#b2b2b2;font-weight:400;">? <span style="letter-spacing:-0.75px">FLOAT</span></div>
<div style="position:absolute;left:1213.1px;top:826.5px;width:10px;height:10px;border-radius:50%;background:#2f5c99"></div>
<div class="t" style="left:1232.20px;top:824.09px;font-size:16.2px;color:#e2e2e2;font-weight:400;">date</div>
<div class="t" style="right:498.90px;top:825.10px;font-size:15px;color:#b2b2b2;font-weight:400;">? <span style="letter-spacing:-0.65px">DATE</span></div>
<div style="position:absolute;left:1213.1px;top:863.5px;width:10px;height:10px;border-radius:50%;background:#2f5c99"></div>
<div class="t" style="left:1232.20px;top:861.09px;font-size:16.2px;color:#e2e2e2;font-weight:400;">current_val</div>
<div class="t" style="right:498.90px;top:862.10px;font-size:15px;color:#b2b2b2;font-weight:400;">? <span style="letter-spacing:-0.75px">FLOAT</span></div>
<svg style="position:absolute;left:0;top:0;overflow:visible" width="1" height="1"><defs><clipPath id="c1488479"><rect x="1489.0" y="480" width="224.2" height="274.8" rx="7.5"/></clipPath></defs><g clip-path="url(#c1488479)"><rect x="1489.0" y="480" width="224.2" height="274.8" fill="#252528"/><rect x="1489.0" y="480" width="224.2" height="10.800000000000011" fill="#fb8a4c"/><rect x="1489.0" y="490.8" width="224.2" height="40.2" fill="#18181b"/><rect x="1489.0" y="531" width="224.2" height="1" fill="#59595c"/><rect x="1489.0" y="568" width="224.2" height="1" fill="#59595c"/><rect x="1489.0" y="605" width="224.2" height="1" fill="#59595c"/><rect x="1489.0" y="642" width="224.2" height="1" fill="#59595c"/><rect x="1489.0" y="679" width="224.2" height="1" fill="#59595c"/><rect x="1489.0" y="716" width="224.2" height="1" fill="#59595c"/></g><rect x="1489.0" y="480" width="224.2" height="274.8" rx="7.5" fill="none" stroke="#74747b" stroke-width="1.64"/></svg>
<div class="t" style="left:1502.60px;top:504.54px;font-size:15.9px;color:#eeeeee;font-weight:700;">loans</div>
<div style="position:absolute;left:1498.1px;top:544.5px;width:10px;height:10px;border-radius:50%;background:#2f5c99"></div>
<div class="t" style="left:1517.20px;top:542.09px;font-size:16.2px;color:#e2e2e2;font-weight:400;">id</div>
<div class="t" style="right:213.90px;top:543.10px;font-size:15px;color:#b2b2b2;font-weight:400;">INT</div>
<svg style="position:absolute;left:1653.6px;top:531px;overflow:visible" width="30" height="37"><g transform="translate(16,16.6) scale(0.86) rotate(-45)"><g fill="none" stroke="#b2b2b2" stroke-width="1.7" stroke-linejoin="miter"><circle cx="0" cy="0" r="4.6"/><path d="M-4.4,-1.9 H-12.9 V3.1 H-10.9 V2.2 H-9.0 V3.1 H-7.2 V1.9 H-4.4"/></g><circle cx="0" cy="0" r="1.15" fill="#b2b2b2"/></g></svg>
<div style="position:absolute;left:1498.1px;top:581.5px;width:10px;height:10px;border-radius:50%;background:#2f5c99"></div>
<div class="t" style="left:1517.20px;top:579.09px;font-size:16.2px;color:#e2e2e2;font-weight:400;">customer_id</div>
<div class="t" style="right:213.90px;top:580.10px;font-size:15px;color:#b2b2b2;font-weight:400;">? INT</div>
<div style="position:absolute;left:1498.1px;top:618.5px;width:10px;height:10px;border-radius:50%;background:#2f5c99"></div>
<div class="t" style="left:1517.20px;top:616.09px;font-size:16.2px;color:#e2e2e2;font-weight:400;">amount</div>
<div class="t" style="right:213.90px;top:617.10px;font-size:15px;color:#b2b2b2;font-weight:400;">? <span style="letter-spacing:-0.75px">FLOAT</span></div>
<div style="position:absolute;left:1498.1px;top:655.5px;width:10px;height:10px;border-radius:50%;background:#2f5c99"></div>
<div class="t" style="left:1517.20px;top:653.09px;font-size:16.2px;color:#e2e2e2;font-weight:400;">rate</div>
<div class="t" style="right:213.90px;top:654.10px;font-size:15px;color:#b2b2b2;font-weight:400;">? <span style="letter-spacing:-0.75px">FLOAT</span></div>
<div style="position:absolute;left:1498.1px;top:692.5px;width:10px;height:10px;border-radius:50%;background:#2f5c99"></div>
<div class="t" style="left:1517.20px;top:690.09px;font-size:16.2px;color:#e2e2e2;font-weight:400;">term</div>
<div class="t" style="right:213.90px;top:691.10px;font-size:15px;color:#b2b2b2;font-weight:400;">? <span style="letter-spacing:-0.65px">DATE</span></div>
<div style="position:absolute;left:1498.1px;top:729.5px;width:10px;height:10px;border-radius:50%;background:#2f5c99"></div>
<div class="t" style="left:1517.20px;top:727.09px;font-size:16.2px;color:#e2e2e2;font-weight:400;">status</div>
<div class="t" style="right:213.90px;top:728.10px;font-size:15px;color:#b2b2b2;font-weight:400;">? ENUM</div>
<svg style="position:absolute;left:0;top:0;overflow:visible" width="1" height="1"><defs><clipPath id="c1417218"><rect x="1417.7" y="219" width="224.2" height="237.8" rx="7.5"/></clipPath></defs><g clip-path="url(#c1417218)"><rect x="1417.7" y="219" width="224.2" height="237.8" fill="#252528"/><rect x="1417.7" y="219" width="224.2" height="10.800000000000011" fill="#f0d24f"/><rect x="1417.7" y="229.8" width="224.2" height="40.2" fill="#18181b"/><rect x="1417.7" y="270" width="224.2" height="1" fill="#59595c"/><rect x="1417.7" y="307" width="224.2" height="1" fill="#59595c"/><rect x="1417.7" y="344" width="224.2" height="1" fill="#59595c"/><rect x="1417.7" y="381" width="224.2" height="1" fill="#59595c"/><rect x="1417.7" y="418" width="224.2" height="1" fill="#59595c"/></g><rect x="1417.7" y="219" width="224.2" height="237.8" rx="7.5" fill="none" stroke="#74747b" stroke-width="1.64"/></svg>
<div class="t" style="left:1431.30px;top:243.54px;font-size:15.9px;color:#eeeeee;font-weight:700;">credit_cards</div>
<div style="position:absolute;left:1426.8px;top:283.5px;width:10px;height:10px;border-radius:50%;background:#2f5c99"></div>
<div class="t" style="left:1445.90px;top:281.09px;font-size:16.2px;color:#e2e2e2;font-weight:400;">id</div>
<div class="t" style="right:286.20px;top:282.10px;font-size:15px;color:#b2b2b2;font-weight:400;">INT</div>
<svg style="position:absolute;left:1581.3px;top:270px;overflow:visible" width="30" height="37"><g transform="translate(16,16.6) scale(0.86) rotate(-45)"><g fill="none" stroke="#b2b2b2" stroke-width="1.7" stroke-linejoin="miter"><circle cx="0" cy="0" r="4.6"/><path d="M-4.4,-1.9 H-12.9 V3.1 H-10.9 V2.2 H-9.0 V3.1 H-7.2 V1.9 H-4.4"/></g><circle cx="0" cy="0" r="1.15" fill="#b2b2b2"/></g></svg>
<div style="position:absolute;left:1426.8px;top:320.5px;width:10px;height:10px;border-radius:50%;background:#2f5c99"></div>
<div class="t" style="left:1445.90px;top:318.09px;font-size:16.2px;color:#e2e2e2;font-weight:400;">type</div>
<div class="t" style="right:286.20px;top:319.10px;font-size:15px;color:#b2b2b2;font-weight:400;">? ENUM</div>
<div style="position:absolute;left:1426.8px;top:357.5px;width:10px;height:10px;border-radius:50%;background:#2f5c99"></div>
<div class="t" style="left:1445.90px;top:355.09px;font-size:16.2px;color:#e2e2e2;font-weight:400;">customer_id</div>
<div class="t" style="right:286.20px;top:356.10px;font-size:15px;color:#b2b2b2;font-weight:400;">? INT</div>
<div style="position:absolute;left:1426.8px;top:394.5px;width:10px;height:10px;border-radius:50%;background:#2f5c99"></div>
<div class="t" style="left:1445.90px;top:392.09px;font-size:16.2px;color:#e2e2e2;font-weight:400;">number</div>
<div class="t" style="right:286.20px;top:393.10px;font-size:15px;color:#b2b2b2;font-weight:400;">? <span style="letter-spacing:-0.15px">BIGINT</span></div>
<div style="position:absolute;left:1426.8px;top:431.5px;width:10px;height:10px;border-radius:50%;background:#2f5c99"></div>
<div class="t" style="left:1445.90px;top:429.09px;font-size:16.2px;color:#e2e2e2;font-weight:400;">limit</div>
<div class="t" style="right:286.20px;top:430.10px;font-size:15px;color:#b2b2b2;font-weight:400;">? <span style="letter-spacing:-0.75px">FLOAT</span></div>
<svg style="position:absolute;left:0;top:0;overflow:visible" width="1" height="1"><defs><clipPath id="c998209"><rect x="998.4" y="210.5" width="224.2" height="237.8" rx="7.5"/></clipPath></defs><g clip-path="url(#c998209)"><rect x="998.4" y="210.5" width="224.2" height="237.8" fill="#252528"/><rect x="998.4" y="210.5" width="224.2" height="10.800000000000011" fill="#3fd67c"/><rect x="998.4" y="221.3" width="224.2" height="40.2" fill="#18181b"/><rect x="998.4" y="261.5" width="224.2" height="1" fill="#59595c"/><rect x="998.4" y="298.5" width="224.2" height="1" fill="#59595c"/><rect x="998.4" y="335.5" width="224.2" height="1" fill="#59595c"/><rect x="998.4" y="372.5" width="224.2" height="1" fill="#59595c"/><rect x="998.4" y="409.5" width="224.2" height="1" fill="#59595c"/></g><rect x="998.4" y="210.5" width="224.2" height="237.8" rx="7.5" fill="none" stroke="#3b82f6" stroke-width="2" stroke-dasharray="4.9 3.3"/></svg>
<div class="t" style="left:1012.00px;top:235.04px;font-size:15.9px;color:#eeeeee;font-weight:700;">transactions</div>
<div style="position:absolute;left:1007.5px;top:275.0px;width:10px;height:10px;border-radius:50%;background:#2f5c99"></div>
<div class="t" style="left:1026.60px;top:272.59px;font-size:16.2px;color:#a6a6a6;font-weight:400;">id</div>
<div style="position:absolute;left:1007.5px;top:312.0px;width:10px;height:10px;border-radius:50%;background:#2f5c99"></div>
<div class="t" style="left:1026.60px;top:309.59px;font-size:16.2px;color:#e2e2e2;font-weight:400;">account_id</div>
<div class="t" style="right:704.50px;top:310.60px;font-size:15px;color:#b2b2b2;font-weight:400;">? INT</div>
<div style="position:absolute;left:1007.5px;top:349.0px;width:10px;height:10px;border-radius:50%;background:#2f5c99"></div>
<div class="t" style="left:1026.60px;top:346.59px;font-size:16.2px;color:#e2e2e2;font-weight:400;">time</div>
<div class="t" style="right:704.50px;top:347.60px;font-size:15px;color:#b2b2b2;font-weight:400;">? <span style="letter-spacing:-0.2px">DATETIME</span></div>
<div style="position:absolute;left:1007.5px;top:386.0px;width:10px;height:10px;border-radius:50%;background:#2f5c99"></div>
<div class="t" style="left:1026.60px;top:383.59px;font-size:16.2px;color:#e2e2e2;font-weight:400;">type</div>
<div class="t" style="right:704.50px;top:384.60px;font-size:15px;color:#b2b2b2;font-weight:400;">? ENUM</div>
<div style="position:absolute;left:1007.5px;top:423.0px;width:10px;height:10px;border-radius:50%;background:#2f5c99"></div>
<div class="t" style="left:1026.60px;top:420.59px;font-size:16.2px;color:#e2e2e2;font-weight:400;">amount</div>
<div class="t" style="right:704.50px;top:421.60px;font-size:15px;color:#b2b2b2;font-weight:400;">? <span style="letter-spacing:-0.75px">FLOAT</span></div>
<div style="position:absolute;left:1158px;top:229px;width:25px;height:25px;background:#2b5797;border-radius:4px;"></div>
<svg style="position:absolute;left:1163px;top:234px;overflow:visible;" width="15" height="15" viewBox="0 0 15 15"><path d="M1.5,13.5 L2.2,10 L10.5,1.7 L13.3,4.5 L5,12.8 Z M9,3.2 L11.8,6" fill="#fff" stroke="#fff" stroke-width="1" stroke-linejoin="round"/><path d="M9,3.2 L11.8,6" stroke="#2b5797" stroke-width="1.2"/></svg>
<div style="position:absolute;left:1189.5px;top:229px;width:25px;height:25px;background:#5c5c5f;border-radius:4px;"></div>
<svg style="position:absolute;left:1195px;top:240px;overflow:visible;" width="14" height="4" viewBox="0 0 14 4"><g fill="#fff"><circle cx="2" cy="2" r="1.7"/><circle cx="7" cy="2" r="1.7"/><circle cx="12" cy="2" r="1.7"/></g></svg>
<div style="position:absolute;left:1189.5px;top:269px;width:25px;height:25px;background:#b3261e;border-radius:4px;"></div>
<div style="position:absolute;left:1195.5px;top:280.5px;width:13px;height:2.5px;background:#fff;border-radius:1px;"></div>
<div style="position:absolute;left:560px;top:340.7px;width:24px;height:24px;border-radius:50%;background:#858585"></div>
<div class="t" style="left:572.30px;transform:translateX(-50%);top:344.20px;font-size:15px;color:#ffffff;font-weight:400;">1</div>
<div style="position:absolute;left:528px;top:647.2px;width:24px;height:24px;border-radius:50%;background:#858585"></div>
<div class="t" style="left:540.30px;transform:translateX(-50%);top:650.70px;font-size:15px;color:#ffffff;font-weight:400;">n</div>
<div style="position:absolute;left:528px;top:684px;width:24px;height:24px;border-radius:50%;background:#858585"></div>
<div class="t" style="left:540.30px;transform:translateX(-50%);top:687.50px;font-size:15px;color:#ffffff;font-weight:400;">n</div>
<div style="position:absolute;left:844px;top:340.7px;width:24px;height:24px;border-radius:50%;background:#858585"></div>
<div class="t" style="left:856.30px;transform:translateX(-50%);top:344.20px;font-size:15px;color:#ffffff;font-weight:400;">1</div>
<div style="position:absolute;left:956.5px;top:304.1px;width:24px;height:24px;border-radius:50%;background:#858585"></div>
<div class="t" style="left:968.80px;transform:translateX(-50%);top:307.60px;font-size:15px;color:#ffffff;font-weight:400;">n</div>
<div style="position:absolute;left:844px;top:377.7px;width:24px;height:24px;border-radius:50%;background:#858585"></div>
<div class="t" style="left:856.30px;transform:translateX(-50%);top:381.20px;font-size:15px;color:#ffffff;font-weight:400;">n</div>
<div style="position:absolute;left:872px;top:572px;width:24px;height:24px;border-radius:50%;background:#858585"></div>
<div class="t" style="left:884.30px;transform:translateX(-50%);top:575.50px;font-size:15px;color:#ffffff;font-weight:400;">1</div>
<div style="position:absolute;left:1155.5px;top:572.6px;width:24px;height:24px;border-radius:50%;background:#858585"></div>
<div class="t" style="left:1167.80px;transform:translateX(-50%);top:576.10px;font-size:15px;color:#ffffff;font-weight:400;">1</div>
<div style="position:absolute;left:1162.6px;top:705.3px;width:24px;height:24px;border-radius:50%;background:#858585"></div>
<div class="t" style="left:1174.90px;transform:translateX(-50%);top:708.80px;font-size:15px;color:#ffffff;font-weight:400;">n</div>
<div style="position:absolute;left:1447px;top:572.6px;width:24px;height:24px;border-radius:50%;background:#858585"></div>
<div class="t" style="left:1459.30px;transform:translateX(-50%);top:576.10px;font-size:15px;color:#ffffff;font-weight:400;">n</div>
<div style="position:absolute;left:1376px;top:350px;width:24px;height:24px;border-radius:50%;background:#858585"></div>
<div class="t" style="left:1388.30px;transform:translateX(-50%);top:353.50px;font-size:15px;color:#ffffff;font-weight:400;">n</div>
<div style="position:absolute;left:1235px;top:201px;width:400px;height:160px;background:#46474c;border:1px solid #505156;box-sizing:border-box;border-radius:7px;box-shadow:0 1px 3px rgba(0,0,0,0.35)"></div>
<svg style="position:absolute;left:1226px;top:271px;overflow:visible;" width="10" height="18" viewBox="0 0 10 18"><path d="M10,0 L1,9 L10,18 Z" fill="#46474c"/></svg>
<div class="t" style="left:1250.00px;top:221.61px;font-size:17px;color:#e2e2e2;font-weight:700;">id</div>
<div class="t" style="right:298.00px;top:222.03px;font-size:16.5px;color:#e2e2e2;font-weight:400;">INT</div>
<div style="position:absolute;left:1250px;top:250px;width:370px;height:2px;background:#a3a3a3;border-radius:0px;"></div>
<div style="position:absolute;left:1250px;top:262px;width:70px;height:24px;background:#404f62;border-radius:4px;"></div>
<div class="t" style="left:1285.00px;transform:translateX(-50%);top:267.30px;font-size:15px;color:#d6e8ff;font-weight:400;">Primary</div>
<div style="position:absolute;left:1330px;top:262px;width:68px;height:24px;background:#5a5243;border-radius:4px;"></div>
<div class="t" style="left:1364.00px;transform:translateX(-50%);top:267.30px;font-size:15px;color:#fff0b8;font-weight:400;">Unique</div>
<div style="position:absolute;left:1408px;top:262px;width:73px;height:24px;background:#52445c;border-radius:4px;"></div>
<div class="t" style="left:1444.50px;transform:translateX(-50%);top:267.30px;font-size:15px;color:#f0d6ff;font-weight:400;">Not null</div>
<div style="position:absolute;left:1491px;top:262px;width:119px;height:24px;background:#3f5347;border-radius:4px;"></div>
<div class="t" style="left:1550.50px;transform:translateX(-50%);top:267.30px;font-size:15px;color:#c8f5c8;font-weight:400;">Autoincrement</div>
<div class="t" style="left:1250.00px;top:302.59px;font-size:17.5px;color:#e2e2e2;font-weight:400;"><b>Default:</b> Not set</div>
<div class="t" style="left:1250.00px;top:327.49px;font-size:17.5px;color:#e2e2e2;font-weight:400;"><b>Comment:</b> Not set</div>
</body></html>
